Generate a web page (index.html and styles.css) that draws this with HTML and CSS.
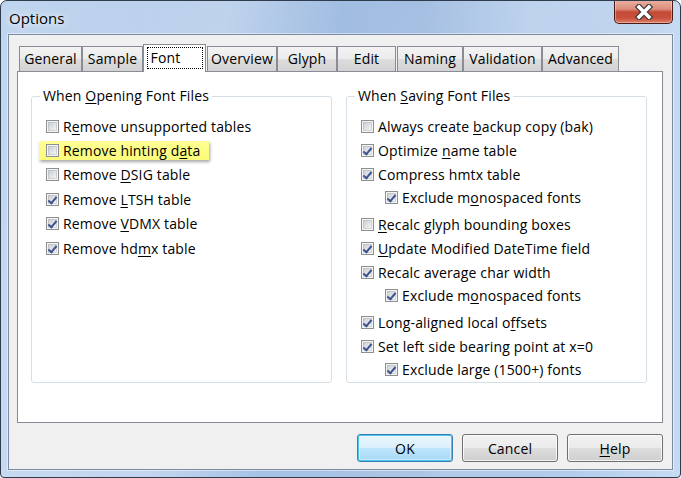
FILE: index.html
```html
<!DOCTYPE html>
<html>
<head>
<meta charset="utf-8">
<link rel="stylesheet" href="styles.css">
</head>
<body>
<div class="window">
  <div class="titlebar">
    <span class="title">Options</span>
    <div class="close">
      <svg width="22" height="16" viewBox="0 0 22 16">
        <path d="M6 3 L16 13 M16 3 L6 13" stroke="#3b3b3b" stroke-width="6" stroke-linecap="square" fill="none"/>
        <path d="M6 3 L16 13 M16 3 L6 13" stroke="#ffffff" stroke-width="3.6" stroke-linecap="square" fill="none"/>
      </svg>
    </div>
  </div>
  <div class="client">
    <div class="tabs">
      <div class="tab">General</div>
      <div class="tab">Sample</div>
      <div class="tab selected"><span class="focus">Font</span></div>
      <div class="tab">Overview</div>
      <div class="tab">Glyph</div>
      <div class="tab">Edit</div>
      <div class="tab">Naming</div>
      <div class="tab">Validation</div>
      <div class="tab">Advanced</div>
    </div>
    <div class="page">
      <fieldset class="group">
        <legend>When <u>O</u>pening Font Files</legend>
        <div class="item wide"><span class="cb"></span><span>R<u>e</u>move unsupported tables</span></div>
        <div class="item wide"><span class="hl"><span class="cb"></span><span>Remove hinting d<u>a</u>ta</span></span></div>
        <div class="item wide"><span class="cb"></span><span>Remove <u>D</u>SIG table</span></div>
        <div class="item wide"><span class="cb on"></span><span>Remove <u>L</u>TSH table</span></div>
        <div class="item wide"><span class="cb on"></span><span>Remove <u>V</u>DMX table</span></div>
        <div class="item wide"><span class="cb on"></span><span>Remove hd<u>m</u>x table</span></div>
      </fieldset>
      <fieldset class="group">
        <legend>When <u>S</u>aving Font Files</legend>
        <div class="item"><span class="cb"></span><span>Always create <u>b</u>ackup copy (bak)</span></div>
        <div class="item"><span class="cb on"></span><span>Optimize <u>n</u>ame table</span></div>
        <div class="item"><span class="cb on"></span><span>Compress hmtx table</span></div>
        <div class="item sub"><span class="cb on"></span><span>Exclude m<u>o</u>nospaced fonts</span></div>
        <div class="item"><span class="cb"></span><span><u>R</u>ecalc glyph bounding boxes</span></div>
        <div class="item"><span class="cb on"></span><span><u>U</u>pdate Modified DateTime field</span></div>
        <div class="item"><span class="cb on"></span><span>Recalc average char width</span></div>
        <div class="item sub"><span class="cb on"></span><span>Exclude m<u>o</u>nospaced fonts</span></div>
        <div class="item"><span class="cb on"></span><span>Long-aligned local o<u>f</u>fsets</span></div>
        <div class="item"><span class="cb on"></span><span>Set left side bearing point at x=0</span></div>
        <div class="item sub"><span class="cb on"></span><span>Exclude large (1500+) fonts</span></div>
      </fieldset>
    </div>
    <div class="buttons">
      <button class="btn default">OK</button>
      <button class="btn">Cancel</button>
      <button class="btn"><u>H</u>elp</button>
    </div>
  </div>
</div>
</body>
</html>
```
FILE: styles.css
```css
html, body {
  margin: 0;
  padding: 0;
  background: #ffffff;
}
body {
  font-family: "Open Sans", "Noto Sans", "DejaVu Sans", sans-serif;
  font-size: 14px;
  letter-spacing: 0.15px;
  color: #000;
}
u { text-decoration: underline; text-underline-offset: 2px; }

.window {
  width: 681px;
  height: 478px;
  box-sizing: border-box;
  border: 1px solid #2e3c4e;
  border-radius: 7px 7px 4px 4px;
  padding: 0 7px 7px 7px;
  display: flex;
  flex-direction: column;
  background:
    linear-gradient(100deg, rgba(255,255,255,0) 0%, rgba(255,255,255,0.25) 30%, rgba(255,255,255,0) 45%, rgba(255,255,255,0.2) 70%, rgba(255,255,255,0) 85%),
    linear-gradient(90deg, #c0d6ef 0%, #b0c9e9 20%, #a3bfe3 45%, #9dbae0 62%, #b2cbea 82%, #c6dbf2 100%);
  overflow: hidden;
}

.titlebar {
  height: 33px;
  flex: none;
  display: flex;
  justify-content: space-between;
  align-items: flex-start;
}
.title {
  margin-top: 7px;
  padding-left: 1px;
  font-size: 15px;
  letter-spacing: 0;
  line-height: 20px;
  color: #000;
  text-shadow: 0 0 6px rgba(255,255,255,0.9), 0 0 10px rgba(255,255,255,0.7);
}
.close {
  width: 59px;
  height: 24px;
  margin-top: -1px;
  box-sizing: border-box;
  border: 1px solid #4a1a14;
  border-top: none;
  border-radius: 0 0 5px 5px;
  background: linear-gradient(#eab2a3 0%, #dc8c7b 40%, #c44a35 52%, #c8503c 78%, #e08068 100%);
  box-shadow: inset 0 0 0 1px rgba(255,255,255,0.35);
  display: flex;
  align-items: center;
  justify-content: center;
}
.close svg { display: block; }

.client {
  flex: 1;
  background: #f0f0f0;
  border: 1px solid #7d8ca0;
  box-shadow: 0 0 0 1px rgba(255,255,255,0.45);
  padding: 9px 8px 0 8px;
  display: flex;
  flex-direction: column;
}

.tabs {
  height: 27px;
  display: flex;
  align-items: flex-end;
  padding-left: 2px;
  position: relative;
  z-index: 1;
}
.tab {
  height: 25px;
  box-sizing: border-box;
  border: 1px solid #898c95;
  border-bottom: none;
  background: linear-gradient(#f3f3f3 0%, #ebebeb 50%, #dddddd 51%, #d2d2d2 100%);
  display: flex;
  align-items: center;
  justify-content: center;
  line-height: 20px;
  padding-bottom: 0;
}
.tab:nth-child(1) { width: 63px; }
.tab:nth-child(2) { width: 61px; }
.tab:nth-child(3) { width: 63px; }
.tab:nth-child(4) { width: 70px; margin-left: 1px; }
.tab:nth-child(5) { width: 60px; }
.tab:nth-child(6) { width: 59px; }
.tab:nth-child(7) { width: 66px; margin-left: 1px; }
.tab:nth-child(8) { width: 79px; }
.tab:nth-child(9) { width: 77px; }
.tab.selected {
  height: 28px;
  margin-bottom: -1px;
  background: #ffffff;
  align-items: flex-start;
  padding-top: 2px;
}
.focus {
  width: 56px;
  height: 22px;
  box-sizing: border-box;
  border: 1px dotted #000;
  padding-left: 3px;
  line-height: 19px;
}

.page {
  width: 646px;
  height: 352px;
  box-sizing: border-box;
  border: 1px solid #898c95;
  background: #ffffff;
  padding: 14px 0 0 13px;
  display: flex;
  gap: 14px;
  align-items: flex-start;
}

.group {
  width: 301px;
  height: 297px;
  box-sizing: border-box;
  margin: 0;
  padding: 8px 0 0 14px;
  border: 1px solid #d5dfe5;
  border-radius: 3px;
  min-width: 0;
}
.group legend {
  margin-left: -6px;
  padding: 0 3px;
  line-height: 20px;
}

.item {
  height: 24px;
  display: flex;
  align-items: center;
  gap: 4px;
  white-space: nowrap;
}
.item.wide { height: 24.4px; }
.item.sub {
  height: 22px;
  margin-left: 24px;
  margin-bottom: 4px;
}

.hl {
  display: flex;
  align-items: center;
  gap: 4px;
  height: 19px;
  margin-left: -7px;
  padding: 0 9px 0 7px;
  background: linear-gradient(#ffff94, #fbfb7a);
  box-shadow: 1px 2px 3px rgba(0,0,0,0.35);
}

.cb {
  width: 13px;
  height: 13px;
  flex: none;
  box-sizing: border-box;
  border: 1px solid #8e8f8f;
  background: #f4f4f4;
  padding: 1px;
  position: relative;
}
.cb::before {
  content: "";
  display: block;
  width: 9px;
  height: 9px;
  background: linear-gradient(135deg, #c9cdd3 0%, #e2e4e7 55%, #f6f6f6 100%);
  box-shadow: inset 0 0 0 1px rgba(160,165,172,0.35);
}
.cb.on::after {
  content: "";
  position: absolute;
  left: 3px;
  top: 1px;
  width: 3px;
  height: 7px;
  border: solid #3e5490;
  border-width: 0 2px 2px 0;
  transform: rotate(40deg);
}

.buttons {
  width: 646px;
  margin-top: 11px;
  display: flex;
  justify-content: flex-end;
  gap: 9px;
}
.btn {
  width: 96px;
  height: 28px;
  box-sizing: border-box;
  border: 1px solid #707070;
  border-radius: 3px;
  background: linear-gradient(#f2f2f2 0%, #ebebeb 50%, #dddddd 51%, #cfcfcf 100%);
  box-shadow: inset 0 0 0 1px rgba(255,255,255,0.75);
  font-family: inherit;
  font-size: 14px;
  letter-spacing: 0.15px;
  color: #000;
  padding: 0;
}
.btn.default {
  border-color: #3c7fb1;
  box-shadow: inset 0 0 0 1px #48c6f0, inset 0 0 0 2px rgba(255,255,255,0.4);
  background: linear-gradient(#eaf6fd 0%, #d9f0fc 50%, #bee6fd 51%, #a7d9f5 100%);
}
```
